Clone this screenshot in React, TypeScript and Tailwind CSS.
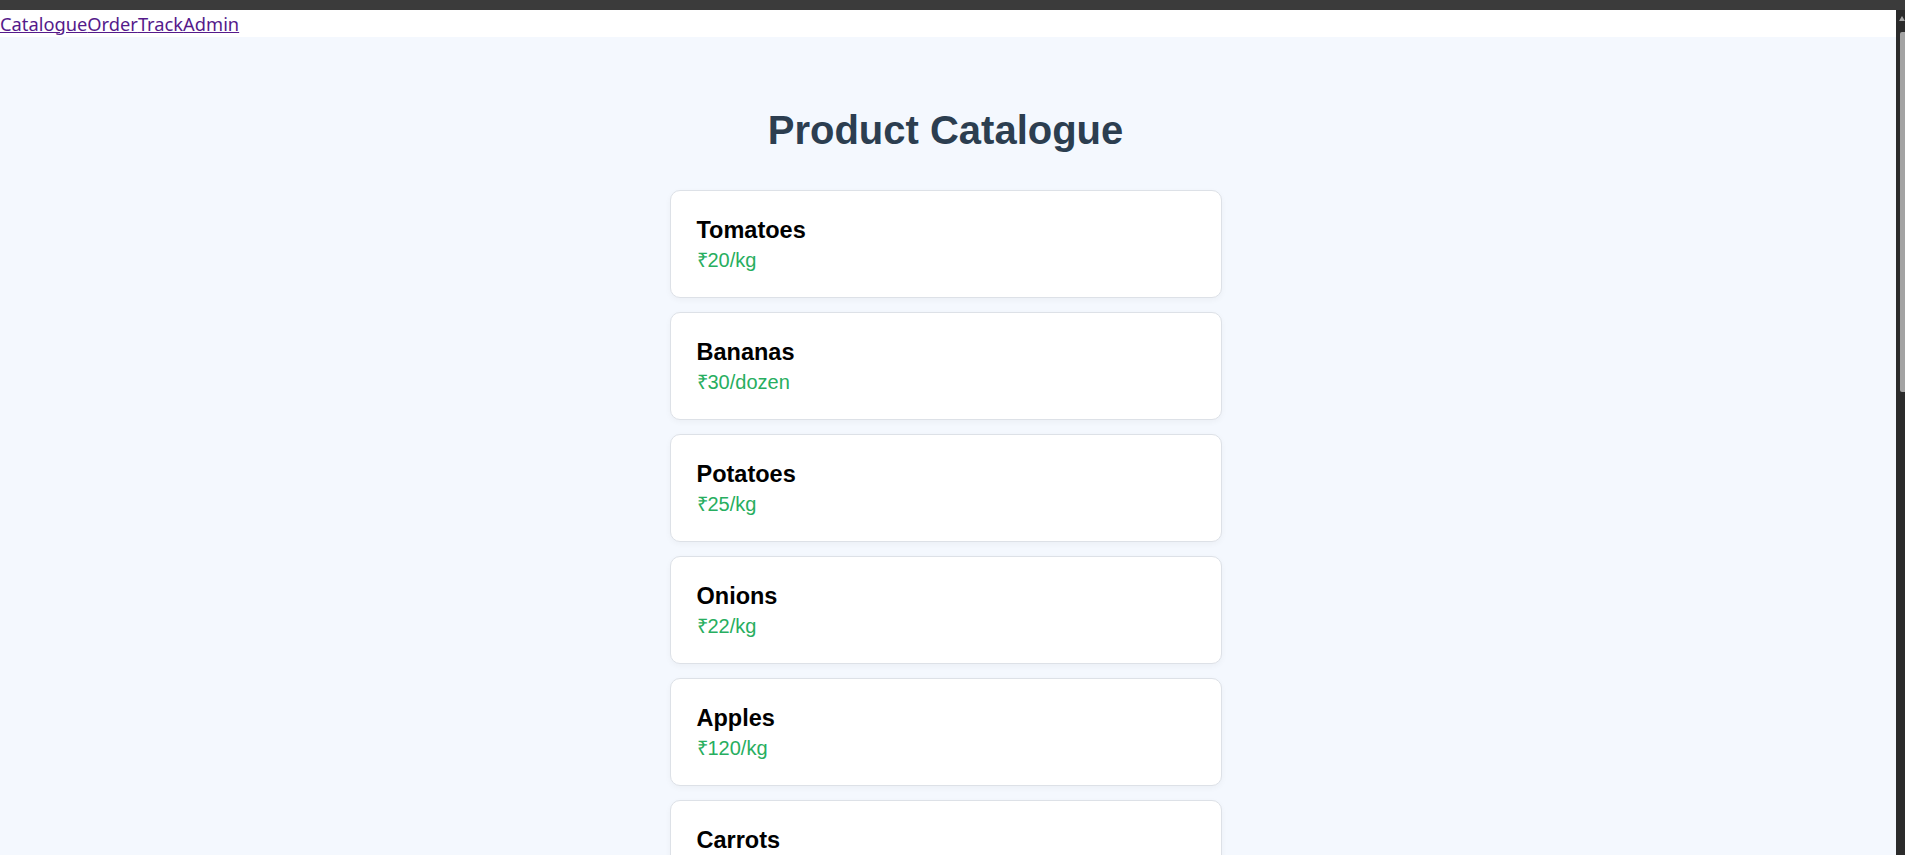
import React from "react";

const products = [
  { name: "Tomatoes", price: "₹20/kg" },
  { name: "Bananas", price: "₹30/dozen" },
  { name: "Potatoes", price: "₹25/kg" },
  { name: "Onions", price: "₹22/kg" },
  { name: "Apples", price: "₹120/kg" },
  { name: "Carrots", price: "₹40/kg" },
  { name: "Spinach", price: "₹15/bunch" },
];

export default function App() {
  return (
    <div className="h-[855px] overflow-hidden flex flex-col bg-[#3b3b3b]">
      <div className="h-[10px] shrink-0 bg-[#3b3b3b]" />
      <div className="flex flex-1 min-h-0">
        <div className="flex-1 min-w-0 bg-[#f4f8fe] overflow-hidden">
          <nav className="h-[27px] bg-white flex items-center font-['Noto_Sans',sans-serif] text-[18.3px] text-[#551a8b]">
            <a href="#" className="underline text-[#551a8b]">Catalogue</a>
            <a href="#" className="underline text-[#551a8b]">Order</a>
            <a href="#" className="underline text-[#551a8b]">Track</a>
            <a href="#" className="underline text-[#551a8b]">Admin</a>
          </nav>
          <div className="flex flex-col items-center pr-[5px] font-['Liberation_Sans',Arial,sans-serif]">
            <h1 className="mt-[70px] text-[40px] leading-[46px] font-bold text-[#2c3e50]">
              Product Catalogue
            </h1>
            <div className="mt-[37px] w-[552px] flex flex-col gap-[14px]">
              {products.map((p) => (
                <div
                  key={p.name}
                  className="bg-white border border-[#dde1e7] rounded-[10px] px-[26px] pt-[26px] pb-[25px] shadow-[0_2px_6px_rgba(0,0,0,0.04)]"
                >
                  <div className="text-[23.5px] leading-[27px] font-bold text-black">{p.name}</div>
                  <div className="mt-[5px] text-[20px] leading-[23px] text-[#27ae60]">{p.price}</div>
                </div>
              ))}
            </div>
          </div>
        </div>
        <div className="w-[9px] shrink-0 bg-[#2b2b2b] relative">
          <div className="absolute left-[3px] top-[6px] w-0 h-0 border-l-[3px] border-r-[3px] border-b-[5px] border-l-transparent border-r-transparent border-b-[#a3a3a3]" />
          <div className="absolute left-[4px] right-0 top-[22px] h-[360px] bg-[#a3a3a3] rounded-l-[2px]" />
        </div>
      </div>
    </div>
  );
}
